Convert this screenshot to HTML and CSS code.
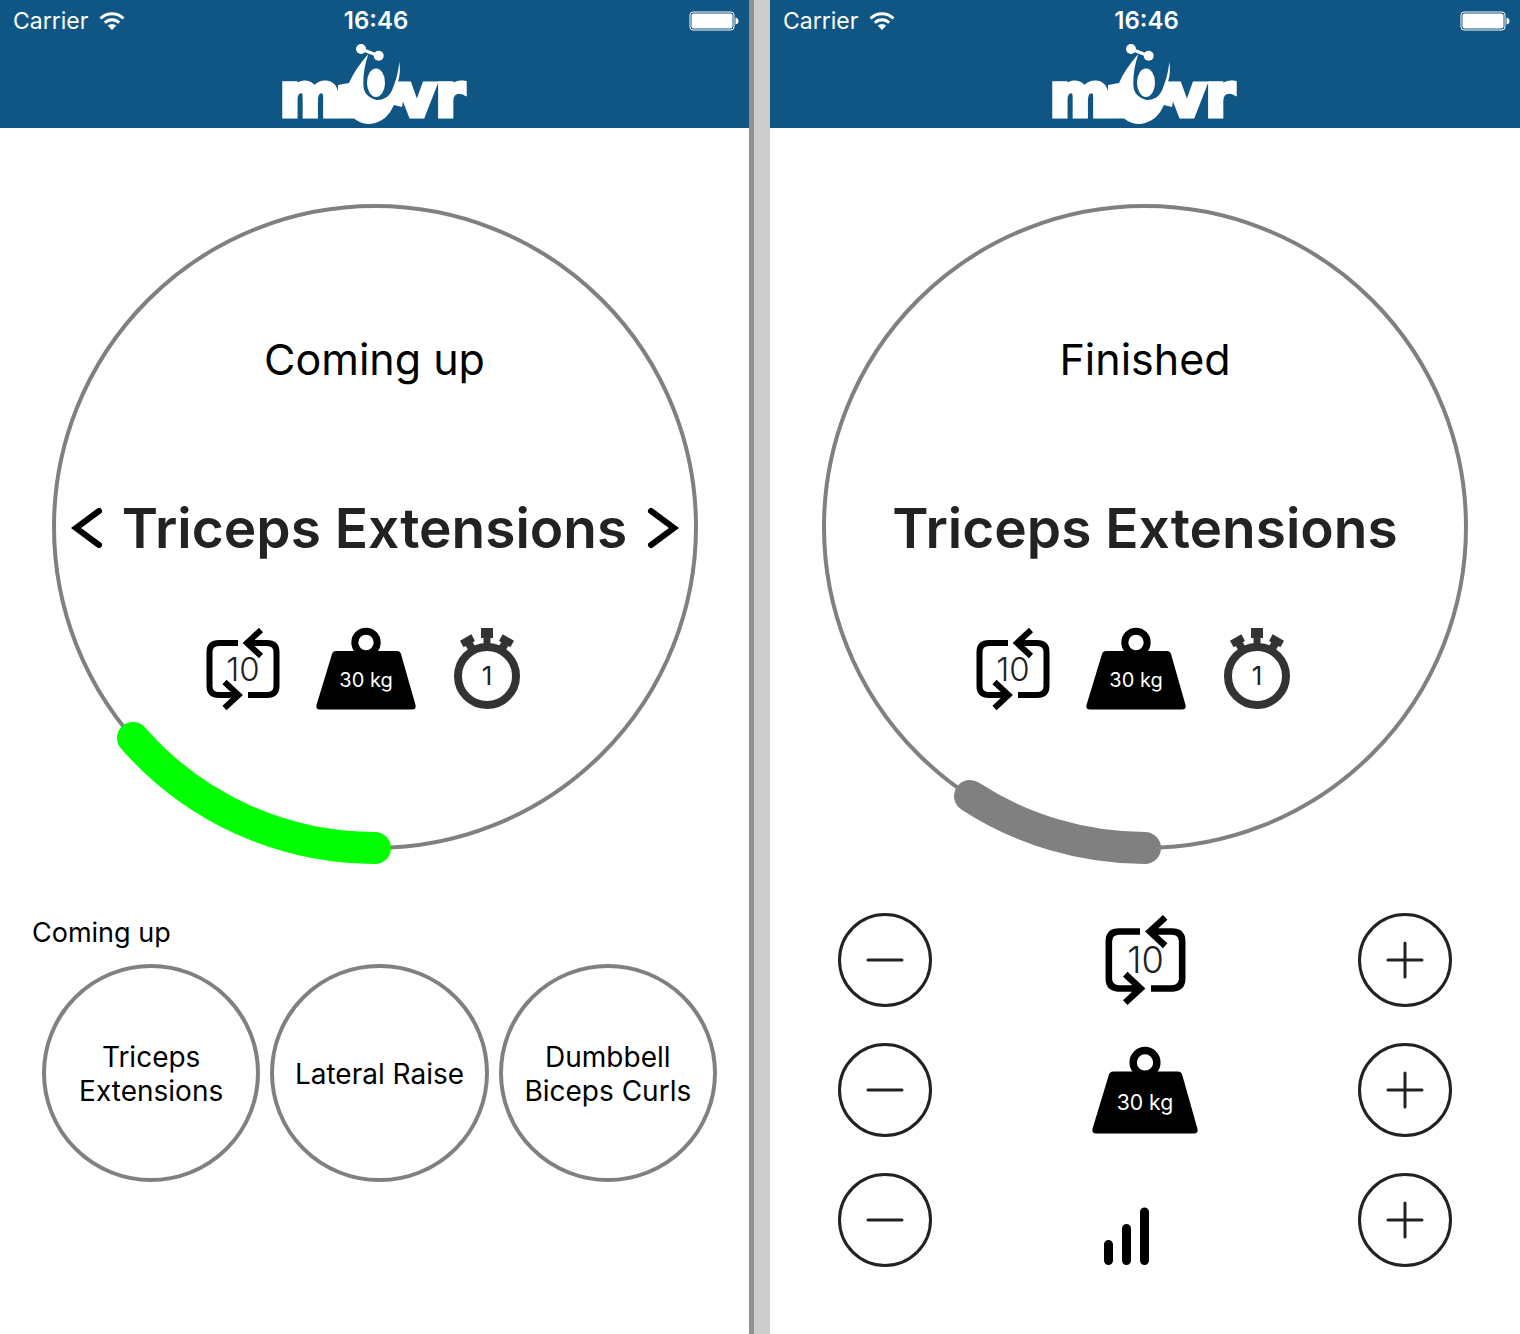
FILE: index.html
```
<!DOCTYPE html>
<html lang="en">
<head>
<meta charset="utf-8">
<meta name="viewport" content="width=device-width, initial-scale=1">
<title>movr</title>
<link rel="stylesheet" href="styles.css">
</head>
<body>
<main class="screens">
  <section class="screen">
    <header class="topbar">
      <div class="status">
        <div class="carrier">Carrier
          <svg class="wifi" viewBox="0 0 26 20" aria-hidden="true"><path class="wave" d="M1.5 7.5a16.3 16.3 0 0 1 23 0M5.8 11.8a10.2 10.2 0 0 1 14.4 0"/><path d="M13 19l-4.2-4.4a6 6 0 0 1 8.4 0z"/></svg>
        </div>
        <time class="clock">16:46</time>
        <svg class="battery" viewBox="0 0 50 20" aria-hidden="true"><rect class="case" x="1" y="1" width="44" height="18" rx="3"/><rect x="2.5" y="2.5" width="41" height="15" rx="2"/><path d="M46.500 6.500q3 .5 3 3.500t-3 3.500z"/></svg>
      </div>
      <svg class="logo" viewBox="0 0 188 84" role="img" aria-label="movr">
        <text class="wordmark" x="-1" y="74">m</text>
        <text class="wordmark" x="117" y="74">vr</text>
        <path d="M87.300 12Q74 27 68 41L57 43V76.500H73Q80 82 89 82Q98 81 104.700 75.300Q110 70 113 63L121 65L125 43L117 40Q120 31 118.300 19.700Q117 33 113 43Q110 53 104.700 55.700Q100 58.500 95.300 58Q88 56 84.700 51.300Q82 47 82.300 41.300Q82 28 87.300 12Z"/>
        <ellipse cx="95" cy="40.700" rx="9" ry="14.300"/>
        <circle cx="80" cy="7" r="5"/><circle cx="97.700" cy="13.700" r="5"/>
        <path class="bar" d="M80 7L98 14"/>
      </svg>
    </header>

    <div class="dial">
      <svg class="ring" viewBox="0 0 646 646" aria-hidden="true"><circle class="track" cx="323" cy="323" r="321"/><path class="progress go" d="M323 644A321 321 0 0 1 81 534"/></svg>
      <p class="phase">Coming up</p>
      <div class="exercise">
        <button class="arrow" type="button" aria-label="Previous exercise"><svg viewBox="0 0 30 40" aria-hidden="true"><path d="M27 3L4 20L27 37"/></svg></button>
        <h1>Triceps Extensions</h1>
        <button class="arrow" type="button" aria-label="Next exercise"><svg viewBox="0 0 30 40" aria-hidden="true"><path d="M3 3L26 20L3 37"/></svg></button>
      </div>
      <div class="facts">
        <svg class="reps" viewBox="0 0 74 82"><path d="M32 15H13Q3.500 15 3.500 24V58Q3.500 67 13 67H34M42 67H61Q70.500 67 70.500 58V24Q70.500 15 61 15H40M55 2L41 15L55 28M18.500 54L32.500 67L18.500 80"/><text x="37" y="53">10</text></svg>
        <svg class="weight" viewBox="0 0 100 82"><circle cx="50" cy="14.500" r="11.200"/><path d="M20 23H81Q84 23 85 26L99.500 77Q100.500 81.500 96 81.500H4Q-.5 81.500 .5 77L16 26Q17 23 20 23Z"/><text x="50" y="59">30 kg</text></svg>
        <svg class="sets" viewBox="0 0 66 82"><circle cx="33" cy="48" r="29"/><path d="M27 0H39V10H36.500V17H29.500V10H27Z"/><path d="M26.500 4H39.500V11.500H37V17H29V11.500H26.500Z" transform="rotate(-29 33 48)"/><path d="M26.500 4H39.500V11.500H37V17H29V11.500H26.500Z" transform="rotate(29 33 48)"/><text x="33" y="57">1</text></svg>
      </div>
    </div>

    <section class="queue">
      <h2>Coming up</h2>
      <ul>
        <li>Triceps Extensions</li>
        <li>Lateral Raise</li>
        <li>Dumbbell Biceps Curls</li>
      </ul>
    </section>
  </section>

  <div class="divider"></div>

  <section class="screen">
    <header class="topbar">
      <div class="status">
        <div class="carrier">Carrier
          <svg class="wifi" viewBox="0 0 26 20" aria-hidden="true"><path class="wave" d="M1.5 7.5a16.3 16.3 0 0 1 23 0M5.8 11.8a10.2 10.2 0 0 1 14.4 0"/><path d="M13 19l-4.2-4.4a6 6 0 0 1 8.4 0z"/></svg>
        </div>
        <time class="clock">16:46</time>
        <svg class="battery" viewBox="0 0 50 20" aria-hidden="true"><rect class="case" x="1" y="1" width="44" height="18" rx="3"/><rect x="2.5" y="2.5" width="41" height="15" rx="2"/><path d="M46.500 6.500q3 .5 3 3.500t-3 3.500z"/></svg>
      </div>
      <svg class="logo" viewBox="0 0 188 84" role="img" aria-label="movr">
        <text class="wordmark" x="-1" y="74">m</text>
        <text class="wordmark" x="117" y="74">vr</text>
        <path d="M87.300 12Q74 27 68 41L57 43V76.500H73Q80 82 89 82Q98 81 104.700 75.300Q110 70 113 63L121 65L125 43L117 40Q120 31 118.300 19.700Q117 33 113 43Q110 53 104.700 55.700Q100 58.500 95.300 58Q88 56 84.700 51.300Q82 47 82.300 41.300Q82 28 87.300 12Z"/>
        <ellipse cx="95" cy="40.700" rx="9" ry="14.300"/>
        <circle cx="80" cy="7" r="5"/><circle cx="97.700" cy="13.700" r="5"/>
        <path class="bar" d="M80 7L98 14"/>
      </svg>
    </header>

    <div class="dial">
      <svg class="ring" viewBox="0 0 646 646" aria-hidden="true"><circle class="track" cx="323" cy="323" r="321"/><path class="progress" d="M323 644A321 321 0 0 1 148 592"/></svg>
      <p class="phase">Finished</p>
      <div class="exercise"><h1>Triceps Extensions</h1></div>
      <div class="facts">
        <svg class="reps" viewBox="0 0 74 82"><path d="M32 15H13Q3.500 15 3.500 24V58Q3.500 67 13 67H34M42 67H61Q70.500 67 70.500 58V24Q70.500 15 61 15H40M55 2L41 15L55 28M18.500 54L32.500 67L18.500 80"/><text x="37" y="53">10</text></svg>
        <svg class="weight" viewBox="0 0 100 82"><circle cx="50" cy="14.500" r="11.200"/><path d="M20 23H81Q84 23 85 26L99.500 77Q100.500 81.500 96 81.500H4Q-.5 81.500 .5 77L16 26Q17 23 20 23Z"/><text x="50" y="59">30 kg</text></svg>
        <svg class="sets" viewBox="0 0 66 82"><circle cx="33" cy="48" r="29"/><path d="M27 0H39V10H36.500V17H29.500V10H27Z"/><path d="M26.500 4H39.500V11.500H37V17H29V11.500H26.500Z" transform="rotate(-29 33 48)"/><path d="M26.500 4H39.500V11.500H37V17H29V11.500H26.500Z" transform="rotate(29 33 48)"/><text x="33" y="57">1</text></svg>
      </div>
    </div>

    <div class="adjust">
      <div class="adjust-row">
        <button class="step" type="button" aria-label="Fewer repetitions"><svg viewBox="0 0 36 36" aria-hidden="true"><path d="M1 18H35"/></svg></button>
        <svg class="reps large" viewBox="0 0 74 82"><path d="M32 15H13Q3.500 15 3.500 24V58Q3.500 67 13 67H34M42 67H61Q70.500 67 70.500 58V24Q70.500 15 61 15H40M55 2L41 15L55 28M18.500 54L32.500 67L18.500 80"/><text x="37" y="53">10</text></svg>
        <button class="step" type="button" aria-label="More repetitions"><svg viewBox="0 0 36 36" aria-hidden="true"><path d="M1 18H35M18 1V35"/></svg></button>
      </div>
      <div class="adjust-row">
        <button class="step" type="button" aria-label="Less weight"><svg viewBox="0 0 36 36" aria-hidden="true"><path d="M1 18H35"/></svg></button>
        <svg class="weight large" viewBox="0 0 100 82"><circle cx="50" cy="14.500" r="11.200"/><path d="M20 23H81Q84 23 85 26L99.500 77Q100.500 81.500 96 81.500H4Q-.5 81.500 .5 77L16 26Q17 23 20 23Z"/><text x="50" y="59">30 kg</text></svg>
        <button class="step" type="button" aria-label="More weight"><svg viewBox="0 0 36 36" aria-hidden="true"><path d="M1 18H35M18 1V35"/></svg></button>
      </div>
      <div class="adjust-row">
        <button class="step" type="button" aria-label="Lower intensity"><svg viewBox="0 0 36 36" aria-hidden="true"><path d="M1 18H35"/></svg></button>
        <svg class="level" viewBox="0 0 82 90" role="img" aria-label="Intensity"><path d="M4.500 69.500V85.500M22.500 53.500V85.500M40.500 37V85.500"/></svg>
        <button class="step" type="button" aria-label="Higher intensity"><svg viewBox="0 0 36 36" aria-hidden="true"><path d="M1 18H35M18 1V35"/></svg></button>
      </div>
    </div>
  </section>
</main>
</body>
</html>
```
FILE: styles.css
```
* { box-sizing: border-box; }

body {
  margin: 0;
  background: #fff;
  color: #000;
  font-family: Inter, "Liberation Sans", sans-serif;
}

h1, h2, p, ul { margin: 0; padding: 0; }
svg { display: block; flex: none; overflow: visible; }
button { padding: 0; background: none; color: inherit; cursor: pointer; }

.screens {
  display: grid;
  grid-template-columns: 749fr 21px 750fr;
  min-height: 100vh;
}
.screen { min-width: 0; }
.divider {
  border-left: 5px solid #919191;
  background: #ccc;
}

/* Status bar and logo */
.topbar {
  height: 128px;
  background: #105685;
  color: #fff;
  fill: #fff;
}
.status {
  display: grid;
  grid-template-columns: 1fr auto 1fr;
  align-items: center;
  height: 42px;
  padding: 0 10px 0 13px;
  font-size: 24px;
  line-height: 28px;
}
.carrier { display: flex; align-items: center; gap: 11px; font-size: 23px; }
.clock { font-weight: 600; }
.wifi { width: 26px; height: 20px; }
.wave { fill: none; stroke: #fff; stroke-width: 3; }
.battery { width: 50px; height: 20px; justify-self: end; }
.case { fill: none; stroke: #fff; stroke-width: 1; }
.logo { width: 188px; height: 84px; margin: 0 auto; }
.wordmark {
  font: bold 58px "DejaVu Sans", sans-serif;
  stroke: #fff;
  stroke-width: 5;
}
.bar { stroke: #fff; stroke-width: 3; }

/* Progress dial */
.dial {
  position: relative;
  width: min(646px, 100%);
  aspect-ratio: 1;
  margin: 76px auto 0;
  padding: 129px 20px 0;
}
.ring {
  position: absolute;
  inset: 0;
  width: 100%;
  height: 100%;
  fill: none;
  stroke: gray;
  pointer-events: none;
}
.track { stroke-width: 4; }
.progress { stroke-width: 32; stroke-linecap: round; }
.go { stroke: #0f0; }
.phase {
  font-size: 43px;
  line-height: 52px;
  text-align: center;
}
.exercise {
  display: flex;
  justify-content: center;
  align-items: center;
  gap: 20px;
  margin-top: 109px;
}
.exercise h1 {
  flex: 1;
  color: #222;
  font-size: 55px;
  font-weight: 600;
  line-height: 68px;
  text-align: center;
  white-space: nowrap;
}
.arrow { width: 30px; height: 40px; border: 0; }
.arrow svg {
  width: 30px;
  height: 40px;
  fill: none;
  stroke: #000;
  stroke-width: 6;
  stroke-linecap: round;
}
.facts {
  display: flex;
  justify-content: center;
  gap: 36px;
  margin-top: 66px;
  padding-right: 24px;
}
.facts text, .adjust text { text-anchor: middle; stroke: none; }
.reps { width: 74px; height: 82px; fill: none; stroke: #000; stroke-width: 6; }
.reps text { fill: #222; font-size: 33px; font-weight: 300; }
.weight { width: 100px; height: 82px; }
.weight circle { fill: none; stroke: #000; stroke-width: 7; }
.weight text { fill: #fff; font-size: 20px; }
.sets { width: 66px; height: 82px; margin-left: 2px; fill: #333; }
.sets circle { fill: none; stroke: #333; stroke-width: 8; }
.sets text { fill: #222; font-size: 26px; }

/* Upcoming exercises */
.queue { padding: 66px 32px 32px; }
.queue h2 {
  font-size: 27px;
  font-weight: 400;
  line-height: 34px;
}
.queue ul {
  display: grid;
  grid-template-columns: repeat(3, 1fr);
  gap: 10px;
  margin-top: 14px;
  padding-left: 10px;
  list-style: none;
}
.queue li {
  display: flex;
  align-items: center;
  justify-content: center;
  aspect-ratio: 1;
  padding: 2px 16px 0;
  border: 4px solid gray;
  border-radius: 50%;
  font-size: 28px;
  line-height: 34px;
  text-align: center;
}

/* Result adjustment */
.adjust {
  display: grid;
  gap: 36px;
  padding: 63px 68px;
}
.adjust-row {
  display: flex;
  align-items: center;
  justify-content: space-between;
}
.step {
  display: grid;
  place-items: center;
  width: 94px;
  height: 94px;
  border: 3px solid #222;
  border-radius: 50%;
}
.step svg {
  width: 36px;
  height: 36px;
  stroke: #222;
  stroke-width: 3;
  stroke-linecap: round;
}
.reps.large { width: 81px; height: 90px; }
.weight.large { width: 106px; height: 87px; }
.level {
  width: 82px;
  height: 90px;
  stroke: #000;
  stroke-width: 9;
  stroke-linecap: round;
}
```
